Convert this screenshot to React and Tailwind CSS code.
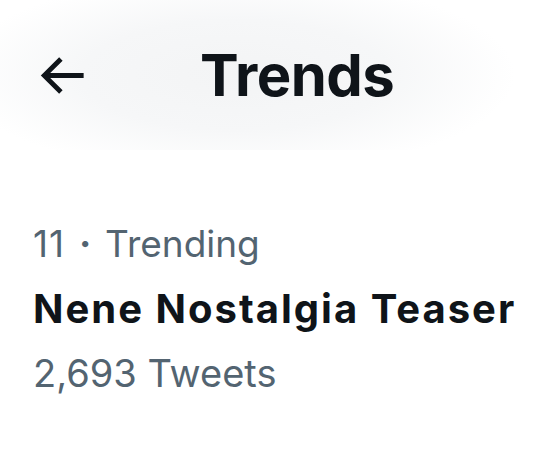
const BackArrow = () => (
  <svg viewBox="0 0 24 24" className="w-[59px] h-[59px] fill-[#0f1419] shrink-0">
    <path d="M7.414 13l5.043 5.04-1.414 1.42L3.586 12l7.457-7.46 1.414 1.42L7.414 11H21v2H7.414z" />
  </svg>
);

const App = () => {
  return (
    <div className="w-full h-[471px] bg-white overflow-hidden font-['Segoe_UI','Inter',sans-serif]">
      {/* Header */}
      <div className="h-[150px] flex items-center pl-[32px] bg-[radial-gradient(ellipse_280px_100px_at_235px_75px,#f3f4f5_0%,#f6f7f8_55%,#ffffff_100%)]">
        <BackArrow />
        <h2 className="ml-[109px] text-[58px] font-bold text-[#0f1419] leading-none tracking-[-0.5px]">
          Trends
        </h2>
      </div>

      {/* Trend */}
      <div className="px-[33px] pt-[61px]">
        <div className="flex items-baseline text-[37px] leading-[65px] text-[#536471]">
          <span className="tracking-[1px]">11</span>
          <span className="w-[40px] text-center font-bold">·</span>
          <span>Trending</span>
        </div>
        <div className="text-[40px] leading-[65px] font-bold text-[#0f1419] tracking-[2px] whitespace-nowrap">
          Nene Nostalgia Teaser
        </div>
        <div className="text-[38px] leading-[65px] text-[#536471]">2,693 Tweets</div>
      </div>
    </div>
  );
};

export default App;
